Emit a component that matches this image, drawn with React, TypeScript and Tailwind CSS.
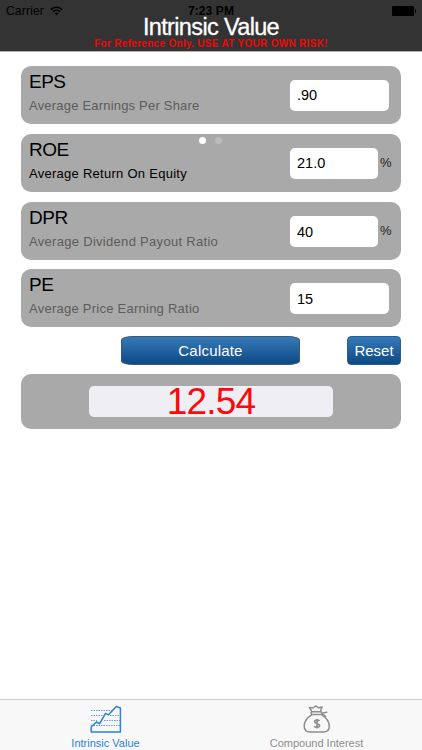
import { useState } from 'react';
import clsx from 'clsx';

type Field = {
  label: string;
  description: string;
  initial: string;
  percent?: boolean;
  active?: boolean;
  textClass: string;
  rowClass: string;
};

const fields: Field[] = [
  {
    label: 'EPS',
    description: 'Average Earnings Per Share',
    initial: '.90',
    textClass: 'tracking-[0.2px]',
    rowClass: 'mb-[10px]',
  },
  {
    label: 'ROE',
    description: 'Average Return On Equity',
    initial: '21.0',
    percent: true,
    active: true,
    textClass: 'tracking-[0.27px]',
    rowClass: 'mb-[10.5px]',
  },
  {
    label: 'DPR',
    description: 'Average Dividend Payout Ratio',
    initial: '40',
    percent: true,
    textClass: 'tracking-[0.3px]',
    rowClass: 'mb-[9px]',
  },
  {
    label: 'PE',
    description: 'Average Price Earning Ratio',
    initial: '15',
    textClass: 'tracking-[0.25px]',
    rowClass: 'mb-[9px]',
  },
];

function WifiIcon() {
  return (
    <svg className="ml-[6px] h-[10px] w-[13px]" viewBox="0 0 13 10" fill="none" stroke="#000">
      <path d="M0.8 3.6C4 0.4 9 0.4 12.2 3.6" strokeWidth="1.6" />
      <path d="M2.9 5.7C5 3.7 8 3.7 10.1 5.7" strokeWidth="1.6" />
      <path d="M6.5 9.3L4.5 7.3C5.6 6.3 7.4 6.3 8.5 7.3Z" fill="#000" stroke="none" />
    </svg>
  );
}

function ChartIcon() {
  return (
    <svg className="h-[28px] w-[32px]" viewBox="0 0 32 28" fill="none" stroke="#2b80e0">
      <path
        d="M1.2 27V22L6.5 17L9.5 18.8L15.5 8.3L18.5 9.8L26.3 1.5L30.4 3V27Z"
        strokeWidth="1.5"
        strokeLinejoin="round"
      />
      <g strokeWidth="1" strokeDasharray="1.5 1" opacity="0.75">
        <path d="M1 5.5H22M1 10.5H13M1 15.5H7" />
        <path d="M20 10.5H30M14 15.5H30M1 20.5H30" />
      </g>
    </svg>
  );
}

function MoneyBagIcon() {
  return (
    <svg className="h-[28px] w-[28px]" viewBox="0 0 28 28" fill="none" stroke="#8e8e8e" strokeWidth="1.5">
      <path d="M9.2 7L6.4 2.6L10 3L12.8 0.9L15.4 2.8L19 2L17.2 7" strokeLinejoin="round" />
      <rect x="8" y="6.8" width="11" height="2.6" rx="1.3" />
      <path d="M18.6 8.2C20.6 8.6 22 7 24.4 7.4M18.6 9C20.6 9.6 22 10 23 12" />
      <path d="M9 9.6C4.5 12.4 1.2 17 1.2 21C1.2 25 3.6 27 7 27H20.4C24 27 26.3 25 26.3 21C26.3 16.8 22.8 12.4 18.4 9.6" />
      <path
        d="M16.4 16C15.6 14.8 11.6 14.6 11.6 16.8C11.6 19.2 16.6 18.2 16.6 20.6C16.6 22.8 12.2 22.6 11.2 21.2M14 14V23.6"
        strokeWidth="1.7"
      />
    </svg>
  );
}

function FieldCard({ field }: { field: Field }) {
  const [value, setValue] = useState(field.initial);

  return (
    <div className={clsx('flex h-[58px] rounded-[10px] bg-[#a9a9a9] pl-2', field.rowClass)}>
      <div className="w-[261px] pt-[4px]">
        <h2 className="text-[19px] leading-[24px] tracking-[-0.5px] text-black">{field.label}</h2>
        <p
          className={clsx(
            'mt-[4px] whitespace-nowrap text-[13px] leading-[16px]',
            field.textClass,
            field.active ? 'text-black' : 'text-[#5c5c5c]',
          )}
        >
          {field.description}
        </p>
      </div>
      <input
        aria-label={field.label}
        value={value}
        onChange={(e) => setValue(e.target.value)}
        className={clsx(
          'mt-[14px] h-[31px] rounded-[5px] bg-white pl-[7px] text-[14.5px] text-black outline-none',
          field.percent ? 'w-[88px]' : 'w-[99px]',
        )}
      />
      {field.percent && <span className="ml-[2px] mt-[20px] text-[13px] leading-[18px] text-[#222]">%</span>}
    </div>
  );
}

export default function App() {
  return (
    <div className="relative flex h-[750px] w-[422px] flex-col overflow-hidden bg-white font-['Liberation_Sans',Arial,sans-serif]">
      <header className="h-[52px] border-b border-[#b2b2b2] bg-[#333333]">
        <div className="grid h-[16px] grid-cols-3 pt-[4px] text-[12px] leading-[14px] text-black">
          <div className="flex items-center pl-[6px]">
            <span className="tracking-[0.2px]">Carrier</span>
            <WifiIcon />
          </div>
          <span className="text-center font-bold tracking-[0.1px]">7:23 PM</span>
          <div className="flex items-center justify-end pr-[6px]">
            <div className="h-[10px] w-[22px] rounded-[1px] bg-black" />
            <div className="ml-px h-[4px] w-[1.5px] rounded-r bg-black" />
          </div>
        </div>
        <h1 className="text-center text-[23.5px] leading-[22px] tracking-[-0.65px] text-white [-webkit-text-stroke:0.3px_white]">
          Intrinsic Value
        </h1>
        <p className="text-center text-[10px] font-bold leading-[12px] tracking-[0.3px] text-[#f00808]">
          For Reference Only. USE AT YOUR OWN RISK!
        </p>
      </header>

      <main className="flex-1 pl-[21px] pr-[21px] pt-[13.5px]">
        {fields.map((field) => (
          <FieldCard key={field.label} field={field} />
        ))}

        <div className="flex h-[29px] justify-between pl-[100px]">
          <button className="w-[179px] rounded-[12px/4px] border border-[#3e5870] bg-linear-to-b from-[#3679b8] to-[#0b4a85] pt-px text-[15px] tracking-[0.2px] text-white">
            Calculate
          </button>
          <button className="w-[54px] rounded-[4px] border border-[#285f91] bg-linear-to-b from-[#3679b8] to-[#0b4a85] pt-px text-[15px] text-white">
            Reset
          </button>
        </div>

        <div className="mt-[9px] flex h-[55px] rounded-[10px] bg-[#a9a9a9] pl-[68px] pt-[12px]">
          <output className="h-[31px] w-[244px] rounded-[5px] bg-[#efeef4] text-center text-[37px] leading-[31px] tracking-[-0.8px] text-[#fa0a0a]">
            12.54
          </output>
        </div>
      </main>

      <nav className="grid h-[51px] grid-cols-2 border-t border-[#cfcfcf] bg-[#f8f8f8] text-[11px]">
        <a className="flex flex-col items-center pt-[5px] text-[#2b80e0]">
          <ChartIcon />
          <span className="mt-[4px] leading-[12px]">Intrinsic Value</span>
        </a>
        <a className="flex flex-col items-center pt-[5px] text-[#8e8e8e]">
          <MoneyBagIcon />
          <span className="mt-[4px] leading-[12px]">Compound Interest</span>
        </a>
      </nav>

      {/* page dots float above the cards */}
      <div className="absolute left-[199px] top-[137px] flex gap-[9px]">
        <span className="size-[7px] rounded-full bg-white" />
        <span className="size-[7px] rounded-full bg-[#bcbcbc]" />
      </div>
    </div>
  );
}
